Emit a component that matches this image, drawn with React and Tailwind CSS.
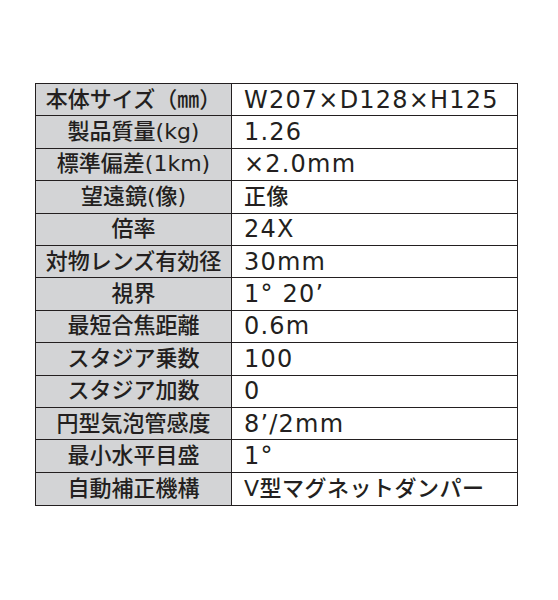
const specs = [
  ["本体サイズ（㎜）", "W207×D128×H125"],
  ["製品質量(kg)", "1.26"],
  ["標準偏差(1km)", "×2.0mm"],
  ["望遠鏡(像)", "正像"],
  ["倍率", "24X"],
  ["対物レンズ有効径", "30mm"],
  ["視界", "1° 20’"],
  ["最短合焦距離", "0.6m"],
  ["スタジア乗数", "100"],
  ["スタジア加数", "0"],
  ["円型気泡管感度", "8’/2mm"],
  ["最小水平目盛", "1°"],
  ["自動補正機構", "V型マグネットダンパー"],
];

// 和文を含む値は少し小さく、字間なし
const hasKana = (s) => /[\u3040-\u9fff]/.test(s);

export default function App() {
  return (
    <div className="min-h-[600px] w-[558px] bg-white pt-[83px] pl-[35px] font-['DejaVu_Sans','Noto_Sans_CJK_JP',sans-serif] font-medium text-[#231f20]">
      <div className="w-[483px] border-[1.5px] border-[#231f20]">
        {specs.map(([label, value], i) => (
          <div
            key={label}
            className={`grid h-[32.4px] grid-cols-[196px_1fr] ${i < specs.length - 1 ? "border-b-[1.5px] border-[#231f20]" : ""}`}
          >
            <div className="flex items-center justify-center border-r-[1.5px] border-[#231f20] bg-[#d3d4d6] text-[22px] leading-none">
              {label}
            </div>
            <div
              className={`flex items-center pl-[12px] leading-none ${hasKana(value) ? "text-[22px] tracking-[0.5px]" : "text-[24px] tracking-[1.2px]"}`}
            >
              {value}
            </div>
          </div>
        ))}
      </div>
    </div>
  );
}
